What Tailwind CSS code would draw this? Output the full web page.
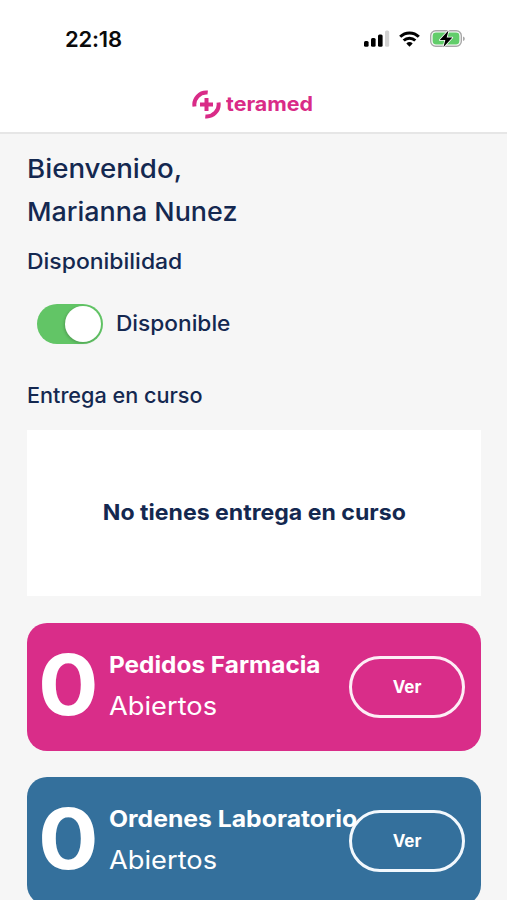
<!DOCTYPE html>
<html lang="es">
<head>
<meta charset="utf-8">
<meta name="viewport" content="width=device-width, initial-scale=1">
<title>Teramed</title>
<script src="https://cdn.jsdelivr.net/npm/@tailwindcss/browser@4"></script>
</head>
<body class="bg-white">
<div class="flex h-[900px] w-[507px] flex-col overflow-hidden bg-[#f6f6f6] font-['Inter',sans-serif] text-[#142850]">
  <header class="h-[134px] shrink-0 border-b-2 border-[#e6e6e6] bg-white">
    <div class="flex h-[76px] items-center pl-[65px] pr-[42px]">
      <span class="pt-px text-[22px] font-semibold leading-none tracking-[-0.2px] text-[#0b0b0b]">22:18</span>
      <svg class="ml-auto mt-px" width="102" height="24" viewBox="363 27 102 24" fill="none">
        <rect x="364" y="41" width="4.600" height="5.700" rx="1.500" fill="#000"/>
        <rect x="371" y="38" width="4.600" height="8.700" rx="1.500" fill="#000"/>
        <rect x="378" y="34.500" width="4.600" height="12.200" rx="1.500" fill="#000"/>
        <rect x="385" y="30.500" width="4.200" height="16.200" rx="1.500" fill="#d2d2d2"/>
        <path d="M400.200 36.800a13.200 13.200 0 0 1 18.600 0M403.700 40.500a8.300 8.300 0 0 1 11.600 0" stroke="#000" stroke-width="3"/>
        <path d="M406.300 43.500a4.700 4.700 0 0 1 6.400 0L409.500 46.800Z" fill="#000"/>
        <rect x="430.700" y="30.700" width="30.600" height="15.600" rx="5" stroke="#a8a8a8" stroke-width="1.400"/>
        <rect x="432.600" y="32.600" width="26.800" height="11.800" rx="3.400" fill="#62cd6b"/>
        <path d="M463 36.500v4.500q1.800-.6 1.800-2.250t-1.800-2.250Z" fill="#a8a8a8"/>
        <path d="M448.500 30.500 439.700 40h5.600l-1.900 7.200 9-9.700h-5.700Z" fill="#000" stroke="#fff" stroke-width="1.600" paint-order="stroke" stroke-linejoin="round"/>
      </svg>
    </div>
    <div class="flex h-[56px] items-center gap-[5px] pl-[192px] text-[#d92b87]">
      <svg width="29" height="29" viewBox="0 0 29 29" fill="none" stroke="currentColor">
        <path d="M2.500 16.500A12 12 0 0 1 15.700 2.600M26.500 12.500A12 12 0 0 1 13.300 26.400" stroke-width="4"/>
        <path d="M14.500 8v13M8 14.500h13" stroke-width="4"/>
      </svg>
      <span class="origin-left scale-x-[1.07] text-[20px] font-bold leading-none">teramed</span>
    </div>
  </header>

  <main class="flex flex-col pl-[27px] pr-[26px] pt-[13px]">
    <h1 class="text-[26px] font-medium leading-[43px]"><span class="block origin-left scale-x-[1.064]">Bienvenido,</span><span class="block origin-left scale-x-[1.034]">Marianna Nunez</span></h1>
    <h2 class="mt-[13px] origin-left scale-x-[1.093] text-[21px] font-medium leading-8">Disponibilidad</h2>
    <div class="mt-[26px] flex h-10 items-center gap-[13px] pl-[10px]">
      <div class="flex h-10 w-[66px] items-center justify-end rounded-full bg-[#62c566] pr-[2px]"><div class="size-9 rounded-full bg-white shadow-[-1px_1px_3px_rgba(0,0,0,0.2)]"></div></div>
      <span class="origin-left scale-x-[1.08] text-[21px] font-medium leading-8">Disponible</span>
    </div>
    <h2 class="mt-[36px] origin-left scale-x-[1.03] text-[21px] font-medium leading-8">Entrega en curso</h2>
    <div class="mt-[18px] flex h-[166px] items-center justify-center bg-white pb-px text-[22px] font-bold"><span class="scale-x-[1.05]">No tienes entrega en curso</span></div>

    <section class="mt-[27px] flex h-[128px] shrink-0 items-center rounded-[20px] bg-[#d92d89] pl-[11px] pr-[17px] text-white">
      <div class="w-[71px] shrink-0 origin-left scale-x-[1.07] pb-[5px] text-[84px] font-bold leading-none">0</div>
      <div class="w-[240px] shrink-0 whitespace-nowrap pb-[2px]">
        <div class="origin-left scale-x-[1.06] text-[23px] font-bold leading-[41px]">Pedidos Farmacia</div>
        <div class="origin-left scale-x-[1.09] text-[25px] leading-[41px]">Abiertos</div>
      </div>
      <button class="h-[62px] w-[116px] shrink-0 rounded-full border-[3px] border-[#fdeef6] pt-px text-[17px] font-bold">Ver</button>
    </section>

    <section class="mt-[26px] flex h-[128px] shrink-0 items-center rounded-[20px] bg-[#34709c] pl-[11px] pr-[17px] text-white">
      <div class="w-[71px] shrink-0 origin-left scale-x-[1.07] pb-[5px] text-[84px] font-bold leading-none">0</div>
      <div class="w-[240px] shrink-0 whitespace-nowrap pb-[2px]">
        <div class="origin-left scale-x-[1.076] text-[23px] font-bold leading-[41px]">Ordenes Laboratorio</div>
        <div class="origin-left scale-x-[1.09] text-[25px] leading-[41px]">Abiertos</div>
      </div>
      <button class="h-[62px] w-[116px] shrink-0 rounded-full border-[3px] border-[#f2f8fd] pt-px text-[17px] font-bold">Ver</button>
    </section>
  </main>
</div>
</body>
</html>
